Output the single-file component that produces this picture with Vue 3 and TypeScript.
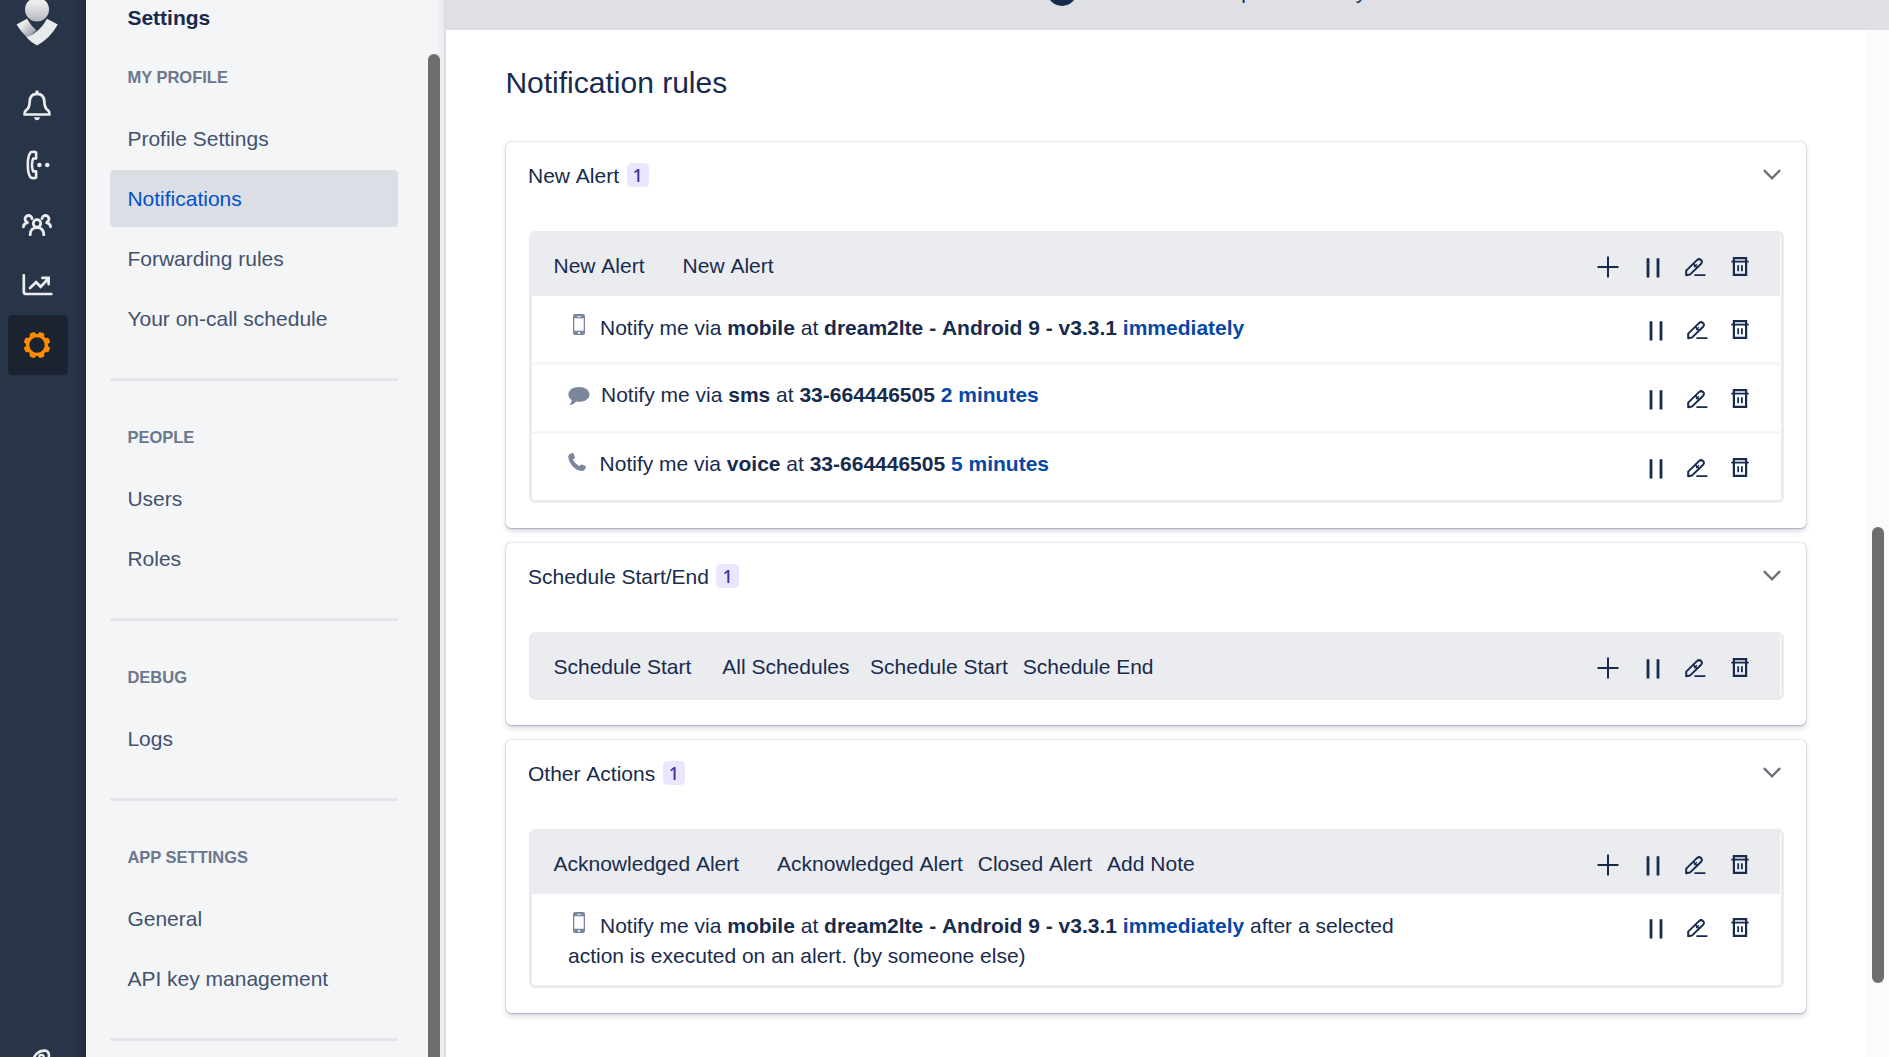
<script setup lang="ts">
import { h, type FunctionalComponent } from 'vue'

interface NavGroup {
  title: string
  items: string[]
}
interface Rule {
  kind: 'mobile' | 'sms' | 'voice'
  target: string
  when: string
  suffix?: string
}
interface Section {
  title: string
  name: string
  tagKind: 'wide' | 'schedule'
  tags: string[]
  rules: Rule[]
}

const navGroups: NavGroup[] = [
  { title: 'MY PROFILE', items: ['Profile Settings', 'Notifications', 'Forwarding rules', 'Your on-call schedule'] },
  { title: 'PEOPLE', items: ['Users', 'Roles'] },
  { title: 'DEBUG', items: ['Logs'] },
  { title: 'APP SETTINGS', items: ['General', 'API key management'] },
]
const activeItem = 'Notifications'

const device = 'dream2lte - Android 9 - v3.3.1'
const sections: Section[] = [
  {
    title: 'New Alert',
    name: 'New Alert',
    tagKind: 'wide',
    tags: ['New Alert'],
    rules: [
      { kind: 'mobile', target: device, when: 'immediately' },
      { kind: 'sms', target: '33-664446505', when: '2 minutes' },
      { kind: 'voice', target: '33-664446505', when: '5 minutes' },
    ],
  },
  {
    title: 'Schedule Start/End',
    name: 'Schedule Start',
    tagKind: 'schedule',
    tags: ['All Schedules', 'Schedule Start', 'Schedule End'],
    rules: [],
  },
  {
    title: 'Other Actions',
    name: 'Acknowledged Alert',
    tagKind: 'wide',
    tags: ['Acknowledged Alert', 'Closed Alert', 'Add Note'],
    rules: [
      {
        kind: 'mobile',
        target: device,
        when: 'immediately',
        suffix: 'after a selected action is executed on an alert. (by someone else)',
      },
    ],
  },
]

const svg = (cls: string, w: number, hgt: number, children: ReturnType<typeof h>[]) =>
  h('svg', { class: cls, width: w, height: hgt, viewBox: `0 0 ${w} ${hgt}`, fill: 'none', stroke: 'currentColor' }, children)

const PlusIcon: FunctionalComponent = () =>
  svg('ico', 22, 22, [h('path', { d: 'M11 .5v21M.5 11h21', 'stroke-width': 2 })])
const PauseIcon: FunctionalComponent = () =>
  svg('ico', 14, 20, [h('path', { d: 'M2 .3v19.2M12 .3v19.2', 'stroke-width': 2.8 })])
const PencilIcon: FunctionalComponent = () =>
  svg('ico', 21, 19, [
    h('path', { d: 'M1.2 17.3V12.6L12.2 1.9Q14.1.3 16 2T16.1 5.7L4.9 16.6Z', 'stroke-width': 2, 'stroke-linejoin': 'round' }),
    h('path', { d: 'M8.4 5.8l4 4M9.4 17.1h11', 'stroke-width': 1.8 }),
    h('path', { d: 'M9 9.2l3-3', 'stroke-width': 1.1 }),
  ])
const TrashIcon: FunctionalComponent = () =>
  svg('ico', 18, 19, [
    h('path', { d: 'M2.9 1.1h12.2v16.8H2.9z', 'stroke-width': 2.2 }),
    h('path', { d: 'M.3 4.6h17.4', 'stroke-width': 1.8 }),
    h('path', { d: 'M7.2 8.2v6M10.9 8.2v6', 'stroke-width': 1.8 }),
  ])
</script>

<template>
  <div class="app">
    <nav class="rail">
      <div class="logo">
        <svg width="44" height="50" viewBox="0 0 44 50">
          <defs>
            <linearGradient id="head" x1="0" y1="0" x2="0" y2="1">
              <stop offset="0.2" stop-color="#ededee" />
              <stop offset="1" stop-color="#b4b7bd" />
            </linearGradient>
            <linearGradient id="arm" x1="0" y1="0" x2="1" y2="1">
              <stop offset="0.3" stop-color="#ebebec" />
              <stop offset="0.85" stop-color="#969ba5" />
            </linearGradient>
          </defs>
          <path d="M1.5 28.5 12 22.7Q15.6 29.5 21.5 34.5L12.5 42Q5.5 35.5 1.5 28.5Z" fill="url(#arm)" />
          <path d="M32 22.7 42.8 28.5Q35 42.5 22 49.4 16 46.5 11.5 41.5 25 36 32 22.7Z" fill="#e9eaeb" />
          <circle cx="22" cy="13.6" r="12" fill="url(#head)" />
        </svg>
      </div>
      <div class="rail-btn">
        <svg width="28" height="31" viewBox="0 0 28 31" fill="none" stroke="#ecedee" stroke-width="2.7" stroke-linejoin="round">
          <path d="M14 3.8C9.3 3.8 6.9 7 6.7 11.5 6.5 16.2 5.9 18.6 3.2 20.2 1.6 21.4 1.4 22.4 1.6 24.5H26.4C26.6 22.4 26.4 21.4 24.8 20.2 22.1 18.6 21.5 16.2 21.3 11.5 21.1 7 18.7 3.8 14 3.8Z" />
          <path d="M14 .6V4" stroke-width="3" />
          <path d="M11 27.2H17Q16.4 30.2 14 30.2T11 27.2Z" fill="#ecedee" stroke="none" />
        </svg>
      </div>
      <div class="rail-btn phone">
        <svg width="26" height="30" viewBox="0 0 26 30" fill="none" stroke="#ecedee" stroke-width="2.6" stroke-linejoin="round">
          <path d="M5.8 2.2Q9.5 1.1 11.1 2.5V8.5H8.2Q5.6 15 8.2 21.4H11.1V27.4Q9.5 28.8 5.8 27.6 2.9 24.5 2.8 15T5.8 2.2Z" />
          <circle cx="14.4" cy="15" r="2.3" fill="#ecedee" stroke="none" />
          <circle cx="22.2" cy="15" r="2.3" fill="#ecedee" stroke="none" />
        </svg>
      </div>
      <div class="rail-btn">
        <svg width="30" height="22" viewBox="0 0 30 22" fill="none" stroke="#ecedee" stroke-width="2.8" stroke-linecap="round">
          <circle cx="15" cy="9.4" r="3.7" />
          <path d="M8.2 20.8C8.2 15.8 11 13.6 15 13.6S21.8 15.8 21.8 20.8" />
          <path d="M10 4.6A3.5 3.5 0 1 0 6.4 8.5C3.4 8.9 1.7 10.6 1.4 12.8" />
          <path d="M20 4.6A3.5 3.5 0 1 1 23.6 8.5C26.6 8.9 28.3 10.6 28.6 12.8" />
        </svg>
      </div>
      <div class="rail-btn">
        <svg width="31" height="22" viewBox="0 0 31 22" fill="none" stroke="#ecedee" stroke-width="2.7" stroke-linecap="round">
          <path d="M1.8 1.2V17.4Q1.8 20 4.4 20H29.4" />
          <path d="M8 14 14.1 8.2 18.6 12.8 26.3 4.8M20.4 3.9H26.6V10.2" />
        </svg>
      </div>
      <div class="rail-btn active">
        <svg width="28" height="28" viewBox="-14 -14 28 28" fill="none">
          <circle r="9.4" stroke="#ff8b00" stroke-width="3.4" />
          <g fill="#ff8b00">
            <path
              v-for="i in 8"
              :key="i"
              d="M-3.6-9.8-2.5-13.1Q0-13.7 2.5-13.1L3.6-9.8Z"
              :transform="`rotate(${i * 45 - 22.5})`"
            />
          </g>
        </svg>
      </div>
      <div class="rail-bottom">
        <svg width="20" height="26" viewBox="0 0 20 26" fill="none" stroke="#ecedee" stroke-width="2.6">
          <path d="M1.5 14C2.5 5.5 8 1.6 13.5 1.6 17.6 1.6 18.5 5 17.6 9.5L15 20" />
          <circle cx="10.5" cy="8" r="2.2" stroke-width="2.2" />
        </svg>
      </div>
    </nav>

    <aside class="sidebar">
      <h1 class="side-title">Settings</h1>
      <div v-for="group in navGroups" :key="group.title" class="nav-group">
        <h2>{{ group.title }}</h2>
        <a v-for="item in group.items" :key="item" class="nav-item" :class="{ selected: item === activeItem }">{{ item }}</a>
        <hr />
      </div>
      <div class="side-thumb"></div>
    </aside>

    <main class="main">
      <div class="banner">
        <div class="banner-row"><i class="banner-dot"></i><span>See more about profile history</span></div>
      </div>
      <div class="content">
        <h2 class="page-title">Notification rules</h2>
        <section v-for="section in sections" :key="section.title" class="card">
          <header class="card-head">
            <span>{{ section.title }}</span>
            <span class="badge">1</span>
            <svg class="chevron" width="18" height="12" viewBox="0 0 18 12" fill="none" stroke="#6b6f78" stroke-width="2.3">
              <path d="M.9 1.1 9 9.4 17.1 1.1" />
            </svg>
          </header>
          <div class="panel">
            <div class="panel-head">
              <span class="rule-name">{{ section.name }}</span>
              <div class="tags" :class="section.tagKind">
                <span v-for="tag in section.tags" :key="tag">{{ tag }}</span>
              </div>
              <div class="actions head-actions"><PlusIcon /><PauseIcon /><PencilIcon /><TrashIcon /></div>
            </div>
            <div v-for="(rule, i) in section.rules" :key="i" class="row" :class="[rule.kind, { tall: rule.suffix }]">
              <p class="rule-text">
                <svg v-if="rule.kind === 'mobile'" class="kind" width="12" height="21" viewBox="0 0 12 21">
                  <path fill="#7a869a" fill-rule="evenodd" d="M2 0H10Q12 0 12 2V19Q12 21 10 21H2Q0 21 0 19V2Q0 0 2 0ZM1.3 4.2V16.8H10.7V4.2ZM4 1.9V2.8H8V1.9ZM5 17.9V19.8H7V17.9Z" />
                </svg>
                <svg v-else-if="rule.kind === 'sms'" class="kind" width="22" height="18" viewBox="0 0 22 18">
                  <path fill="#7a869a" d="M11 0C17 0 21.5 3.2 21.5 7.4S17 14.8 11 14.8C10 14.8 9 14.7 8.2 14.5 6.5 16.4 4.2 17.8 1.4 18 2.7 16.6 3.7 15 3.7 13 1.6 11.6.4 9.7.4 7.4.4 3.2 5 0 11 0Z" />
                </svg>
                <svg v-else class="kind" width="18" height="18" viewBox="0 0 18 18">
                  <path fill="#7a869a" d="M1.8.9 4.6.1Q5.3 0 5.7.7L6.9 4Q7 4.8 6.3 5.4L4.8 6.5Q6.8 10.8 11.4 13.2L12.9 11.7Q13.4 11.2 14.2 11.5L17.4 12.9Q18 13.3 17.9 14L17 16.3Q16.4 17.8 13.6 18 8.8 17.8 4.7 13.3T.2 3.6Q.5 1.4 1.8.9Z" />
                </svg>
                <span>Notify me via <b>{{ rule.kind }}</b> at <b>{{ rule.target }}</b> <b class="when">{{ rule.when }}</b>{{ rule.suffix ? ' ' + rule.suffix : '' }}</span>
              </p>
              <div class="actions row-actions"><PauseIcon /><PencilIcon /><TrashIcon /></div>
            </div>
          </div>
        </section>
      </div>
      <div class="main-track"><div class="main-thumb"></div></div>
    </main>
  </div>
</template>

<style>
html,
body {
  margin: 0;
  overflow: hidden;
}
</style>

<style scoped>
.app {
  display: flex;
  width: 1889px;
  height: 1057px;
  overflow: hidden;
  font-family: 'Liberation Sans', Arial, sans-serif;
  font-size: 21px;
  color: #172b4d;
  background: #fff;
}
h1,
h2,
p {
  margin: 0;
  font-weight: normal;
}

/* icon rail */
.rail {
  flex: none;
  width: 86px;
  height: 1057px;
  overflow: hidden;
  display: flex;
  flex-direction: column;
  background: linear-gradient(to right, transparent 76px, #232a40 86px), #283447;
}
.logo {
  flex: none;
  height: 75px;
  padding-left: 15.2px;
  box-sizing: border-box;
}
.logo svg {
  display: block;
  margin-top: -4.5px;
}
.rail-btn {
  flex: none;
  width: 60px;
  height: 60px;
  margin-left: 8px;
  border-radius: 4px;
  display: flex;
  align-items: center;
  justify-content: center;
  padding-right: 2px;
  box-sizing: border-box;
}
.rail-btn.phone {
  padding-right: 1px;
}
.rail-btn.active {
  background: #1c2330;
  padding-right: 2px;
}
.rail-bottom {
  margin-top: auto;
  height: 8px;
  padding-left: 31px;
}

/* settings navigation */
.sidebar {
  position: relative;
  flex: none;
  width: 360px;
  height: 1057px;
  overflow: hidden;
  box-sizing: border-box;
  padding: 0 46px 0 24px;
  border-right: 2px solid #dcdde2;
  background: linear-gradient(to right, transparent 350px, #e9eaed 358px), #f4f5f7;
}
.side-title {
  height: 54px;
  padding-left: 17.4px;
  font-size: 21px;
  font-weight: bold;
  line-height: 36px;
}
.nav-group h2 {
  height: 56px;
  padding-left: 17.4px;
  font-size: 16.5px;
  font-weight: bold;
  line-height: 46px;
  color: #6b778c;
}
.nav-group + .nav-group h2 {
  padding-top: 33px;
}
.nav-item {
  display: block;
  height: 57px;
  margin-bottom: 3px;
  padding-left: 17.4px;
  line-height: 57px;
  color: #42526e;
  border-radius: 4px;
}
.nav-item.selected {
  background: #dcdee6;
  color: #0052cc;
}
.nav-group hr {
  height: 3px;
  margin: 31px 0 0;
  border: 0;
  border-radius: 2px;
  background: #e2e4ea;
}
.side-thumb {
  position: absolute;
  left: 342px;
  top: 54px;
  width: 12px;
  height: 1100px;
  border-radius: 6px;
  background: #6e6e6e;
}

/* main area */
.main {
  position: relative;
  flex: 1;
  height: 1057px;
  overflow: hidden;
  font-kerning: none;
}
.banner {
  height: 30px;
  overflow: hidden;
  background: #dfe0e6;
}
.banner-row {
  display: flex;
  align-items: center;
  height: 30px;
  margin-top: -24px;
  padding-left: 601px;
  line-height: 30px;
}
.banner-dot {
  width: 30px;
  height: 30px;
  margin-right: 9px;
  border-radius: 50%;
  background: #172b4d;
}
.banner-row span {
  margin-top: 1px;
  white-space: nowrap;
}
.content {
  padding: 0 83px 0 60px;
}
.page-title {
  height: 112px;
  margin-left: -0.6px;
  font-size: 30px;
  line-height: 105px;
}
.card {
  margin-bottom: 15px;
  padding: 0 22px 25px 23px;
  border-radius: 5px;
  background: #fff;
  box-shadow:
    0 0 1.5px rgba(9, 30, 66, 0.4),
    0 1px 1px rgba(9, 30, 66, 0.16),
    0 3px 6px -1px rgba(9, 30, 66, 0.22);
}
.card-head {
  display: flex;
  align-items: center;
  height: 67px;
  margin-bottom: 22px;
  margin-left: -1px;
}
.badge {
  height: 24px;
  margin: 0 0 1px 7.5px;
  padding: 0 6px;
  border-radius: 4.5px;
  background: #eae6ff;
  color: #403294;
  font-family: 'Noto Sans', sans-serif;
  font-size: 18px;
  font-weight: 500;
  line-height: 24px;
}
.chevron {
  margin: 0 3.3px 2px auto;
}
.panel {
  border: 3px solid #ebecf0;
  border-radius: 6px;
}
.panel-head {
  display: flex;
  height: 62px;
  margin-right: 1px;
  padding: 0 31px 0 21.5px;
  line-height: 64px;
  background: #ebecf0;
}
.panel-head span {
  white-space: nowrap;
}
.tags {
  display: flex;
  gap: 15px;
  margin-left: 38px;
}
.tags.schedule {
  margin-left: 31px;
}
.tags.schedule span:first-child {
  margin-right: 5.5px;
}
.actions {
  display: flex;
  align-items: flex-start;
  margin-left: auto;
  color: #172b4d;
}
.head-actions {
  padding-top: 22px;
}
.head-actions > :nth-child(2) {
  margin: 2px 25px 0 27px;
}
.head-actions > :nth-child(3) {
  margin: 2px 25px 0 0;
}
.head-actions > :nth-child(4) {
  margin-top: 1px;
}
.row {
  display: flex;
  height: 66px;
  box-sizing: border-box;
  padding: 0 32px 0 36px;
  line-height: 30px;
}
.row + .row {
  border-top: 3px solid #f4f6f7;
  height: 69px;
}
.row.tall {
  height: 91px;
}
.rule-text {
  width: 850px;
  padding-top: 17px;
}
.row.sms .rule-text,
.row.voice .rule-text {
  padding-top: 15px;
}
.kind {
  vertical-align: baseline;
}
.mobile .kind {
  margin: 0 15px 0 5px;
}
.sms .kind {
  margin: 0 11px 0 0;
  position: relative;
  top: 3px;
}
.voice .kind {
  margin: 0 13.6px 0 0;
}
b {
  font-weight: bold;
}
.when {
  color: #0747a6;
}
.row-actions {
  padding-top: 24px;
}
.row-actions > :nth-child(1) {
  margin: 1px 24px 0 0;
}
.row-actions > :nth-child(2) {
  margin: 1px 23px 0 0;
}
.main-track {
  position: absolute;
  top: 30px;
  right: 0;
  width: 23px;
  height: 1027px;
  background: #fbfbfb;
}
.main-thumb {
  width: 12px;
  height: 456px;
  margin: 497px 0 0 6px;
  border-radius: 6px;
  background: #6e6e6e;
}
</style>
